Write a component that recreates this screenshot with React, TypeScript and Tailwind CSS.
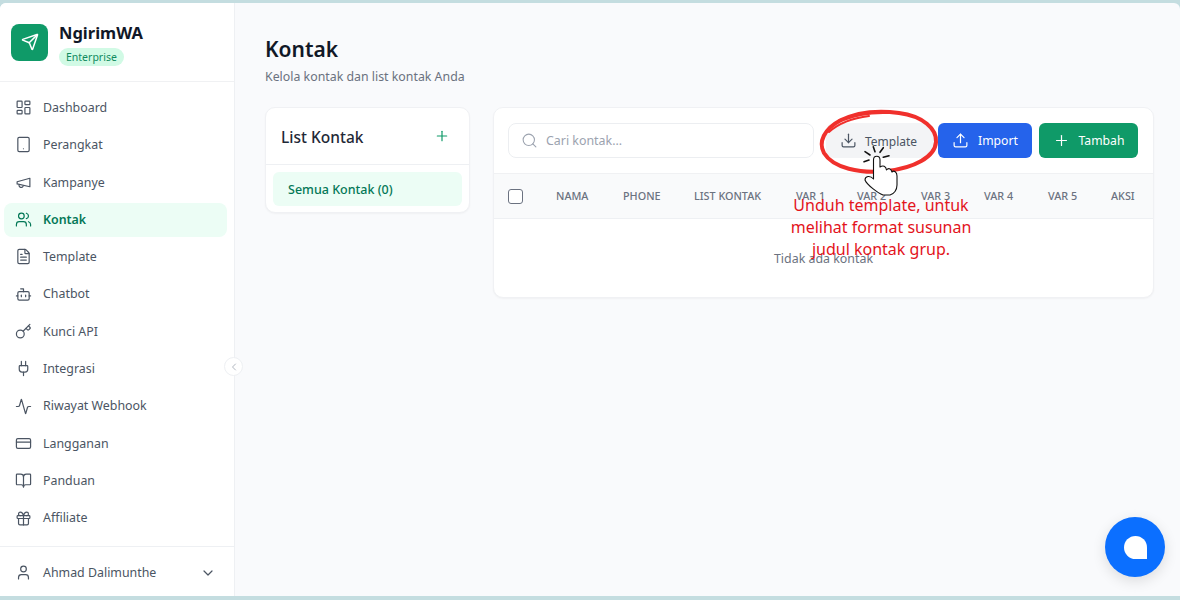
import {
  Activity,
  BookOpen,
  Bot,
  ChevronDown,
  ChevronLeft,
  CreditCard,
  Download,
  FileText,
  Gift,
  Key,
  LayoutDashboard,
  Plug,
  Plus,
  Search,
  Send,
  Tablet,
  Upload,
  User,
  Users,
} from 'lucide-react';

const MegaphoneIcon = ({ className, strokeWidth }: { className?: string; strokeWidth?: number }) => (
  <svg className={className} viewBox="0 0 24 24" fill="none" stroke="currentColor" strokeWidth={strokeWidth} strokeLinecap="round" strokeLinejoin="round">
    <path d="m3 11 18-5v12L3 14v-3z" />
    <path d="M11.6 16.8a3 3 0 1 1-5.8-1.6" />
  </svg>
);

const navItems = [
  { label: 'Dashboard', icon: LayoutDashboard },
  { label: 'Perangkat', icon: Tablet },
  { label: 'Kampanye', icon: MegaphoneIcon },
  { label: 'Kontak', icon: Users, active: true },
  { label: 'Template', icon: FileText },
  { label: 'Chatbot', icon: Bot },
  { label: 'Kunci API', icon: Key },
  { label: 'Integrasi', icon: Plug },
  { label: 'Riwayat Webhook', icon: Activity },
  { label: 'Langganan', icon: CreditCard },
  { label: 'Panduan', icon: BookOpen },
  { label: 'Affiliate', icon: Gift },
];

const columns = ['NAMA', 'PHONE', 'LIST KONTAK', 'VAR 1', 'VAR 2', 'VAR 3', 'VAR 4', 'VAR 5', 'AKSI'];

function Sidebar() {
  return (
    <aside className="flex w-[235px] shrink-0 flex-col border-r border-[#eef0f3] bg-white">
      {/* Logo */}
      <div className="flex h-[79px] shrink-0 items-center gap-[11px] border-b border-[#f0f1f3] pl-[11px]">
        <div className="flex h-[37px] w-[37px] items-center justify-center rounded-[8px] bg-[#0f9a68]">
          <Send className="h-[18px] w-[18px] text-white" strokeWidth={2} />
        </div>
        <div className="flex flex-col items-start pt-[3px]">
          <span className="text-[16.5px] font-bold leading-[22px] text-[#111827]">NgirimWA</span>
          <span className="mt-[4px] rounded-full bg-[#d1fae5] px-[7px] text-[10.5px] leading-[18px] text-[#0f8a5f]">
            Enterprise
          </span>
        </div>
      </div>

      {/* Menu */}
      <nav className="flex flex-1 flex-col pt-[7px]">
        {navItems.map((item) => {
          const Icon = item.icon;
          return (
            <div key={item.label} className="flex h-[37.33px] items-center pl-[4px] pr-[7px]">
              <div
                className={
                  item.active
                    ? 'flex h-[34px] flex-1 items-center gap-[11px] rounded-[8px] bg-[#ecfdf5] pl-[11px] text-[12.4px] font-semibold text-[#047857]'
                    : 'flex h-[34px] flex-1 items-center gap-[11px] rounded-[8px] pl-[11px] text-[12.4px] text-[#4b5563]'
                }
              >
                <Icon className="h-[17px] w-[17px] shrink-0" strokeWidth={1.7} />
                <span className="pt-[1px]">{item.label}</span>
              </div>
            </div>
          );
        })}
      </nav>

      {/* User */}
      <div className="flex h-[50px] shrink-0 items-center border-t border-[#eef0f3] pl-[15px] pr-[18px] pt-[2px] text-[12.4px] text-[#4b5563]">
        <User className="h-[17px] w-[17px]" strokeWidth={1.7} />
        <span className="ml-[11px] flex-1 pt-[1px]">Ahmad Dalimunthe</span>
        <ChevronDown className="h-[16px] w-[16px]" strokeWidth={1.8} />
      </div>
    </aside>
  );
}

function ListCard() {
  return (
    <div className="h-[106px] w-[205px] shrink-0 rounded-[10px] border border-[#f0f1f4] bg-white shadow-[0_1px_2px_rgba(0,0,0,0.04)]">
      <div className="flex h-[57px] items-center justify-between border-b border-[#eef0f3] pl-[15px] pr-[19px]">
        <span className="pt-[3px] text-[15.5px] font-medium text-[#1f2937]">List Kontak</span>
        <Plus className="h-[16px] w-[16px] text-[#0f9a68]" strokeWidth={1.8} />
      </div>
      <div className="px-[7px] pt-[7px]">
        <div className="flex h-[34px] items-center rounded-[6px] bg-[#ecfdf5] pl-[15px] pt-[2px] text-[12.5px] font-medium text-[#047857]">
          Semua Kontak (0)
        </div>
      </div>
    </div>
  );
}

function ContactTable() {
  return (
    <div className="h-[191px] flex-1 overflow-hidden rounded-[10px] border border-[#f0f1f4] bg-white shadow-[0_1px_2px_rgba(0,0,0,0.04)]">
      <div className="flex h-[66px] items-start gap-[12px] border-b border-[#f0f1f3] pl-[14px] pr-[15px] pt-[15px]">
        <div className="flex h-[35px] flex-1 items-center gap-[8px] rounded-[8px] border border-[#eceef1] pl-[12px] text-[12.4px] text-[#9ca3af]">
          <Search className="h-[17px] w-[17px]" strokeWidth={1.5} />
          <span className="pt-[2px]">Cari kontak...</span>
        </div>
        <div className="flex h-[35px] w-[108px] items-center gap-[8px] rounded-[8px] bg-[#f3f4f6] pl-[14px] text-[12px] text-[#4b5563]">
          <Download className="h-[17px] w-[17px]" strokeWidth={1.7} />
          <span className="pt-[2px]">Template</span>
        </div>
        <div className="-ml-[8px] flex h-[35px] w-[94px] items-center justify-center gap-[9px] rounded-[6px] bg-[#2563eb] text-[12.2px] text-white">
          <Upload className="h-[17px] w-[17px]" strokeWidth={1.7} />
          <span className="pt-[2px]">Import</span>
        </div>
        <div className="-ml-[5px] flex h-[35px] w-[99px] items-center justify-center gap-[9px] rounded-[6px] bg-[#0f9a68] text-[12.2px] text-white">
          <Plus className="h-[17px] w-[17px]" strokeWidth={1.7} />
          <span className="pt-[2px]">Tambah</span>
        </div>
      </div>
      <div className="grid h-[45px] grid-cols-[48px_67px_71px_102px_61px_64px_63px_64px_63px_auto] items-center border-b border-[#eef0f3] bg-[#f9fafb] pl-[14px] text-[10.8px] font-medium text-[#6b7280]">
        <div className="h-[15px] w-[15px] rounded-[3px] border border-[#6b7280] bg-white" />
        {columns.map((c) => (
          <span key={c} className="whitespace-nowrap pt-[1px]">
            {c}
          </span>
        ))}
      </div>
      <div className="pt-[31px] text-center text-[12.4px] text-[#6b7280]">Tidak ada kontak</div>
    </div>
  );
}

function Annotation() {
  return (
    <>
      <svg className="absolute left-[815px] top-[105px]" width="130" height="95" viewBox="0 0 130 95" fill="none">
        <path
          d="M24 16 C40 8 62 5 84 8 C108 11 122 24 121 37 C120 52 99 63 72 66 C45 69 18 63 9 48 C3 37 9 24 26 15 C40 9 56 7 68 7"
          stroke="#f0302c"
          strokeWidth="4"
          strokeLinecap="round"
        />
        <path d="M14 27 C24 18 38 13 54 11" stroke="#f0302c" strokeWidth="2" strokeLinecap="round" />
        <path
          d="M58.3 41.7 L60 46.7 M68.3 42.7 L65 47.3 M74 50.7 L68.3 52.3 M50 46.7 L55 50 M49 56.7 L54 55"
          stroke="#111"
          strokeWidth="1.6"
          strokeLinecap="round"
        />
        <path
          d="M58.5 74 L58.5 55 C58.5 50 65 50 65 55 L65 62 C68 60 71 61 71.5 65 C73 63 76 63 77 67 C79 65 82 67 82 71 L82 80 C82 85 79 89 75 90 L68 90 C63 88 52 80 50 75 C50 71 55 70 58.5 74 Z"
          fill="#fff"
          stroke="#111"
          strokeWidth="1.1"
          strokeLinejoin="round"
        />
      </svg>
      <p className="absolute left-[771px] top-[194px] w-[220px] text-center text-[16px] leading-[22px] text-[#e3141c]">
        Unduh template, untuk
        <br />
        melihat format susunan
        <br />
        judul kontak grup.
      </p>
    </>
  );
}

export default function App() {
  return (
    <div className="relative h-[600px] w-[1180px] overflow-hidden bg-[#c4dde0] pt-[3px] pb-[4px] font-['Noto_Sans',sans-serif]">
      <div className="flex h-full overflow-hidden rounded-t-[6px] bg-[#f9fafc]">
        <Sidebar />
        <main className="flex-1 pl-[30px] pr-[26px] pt-[30px]">
          <h1 className="text-[21px] font-semibold leading-[32px] text-[#111827]">Kontak</h1>
          <p className="mt-[2px] pt-[1px] text-[12.35px] leading-[18px] text-[#6b7280]">Kelola kontak dan list kontak Anda</p>
          <div className="mt-[21px] flex items-start gap-[23px]">
            <ListCard />
            <ContactTable />
          </div>
        </main>
      </div>

      {/* Collapse toggle */}
      <div className="absolute left-[224px] top-[357px] flex h-[19px] w-[19px] items-center justify-center rounded-full border border-[#eef0f3] bg-white text-[#9ca3af]">
        <ChevronLeft className="h-[12px] w-[12px]" strokeWidth={1.6} />
      </div>

      <Annotation />

      {/* Chat launcher */}
      <div className="absolute left-[1105px] top-[517px] flex h-[60px] w-[60px] items-center justify-center rounded-full bg-[#0b6fff] shadow-[0_4px_14px_rgba(0,0,0,0.12)]">
        <div className="h-[23px] w-[23px] rounded-t-full rounded-bl-full bg-white" />
      </div>
    </div>
  );
}
